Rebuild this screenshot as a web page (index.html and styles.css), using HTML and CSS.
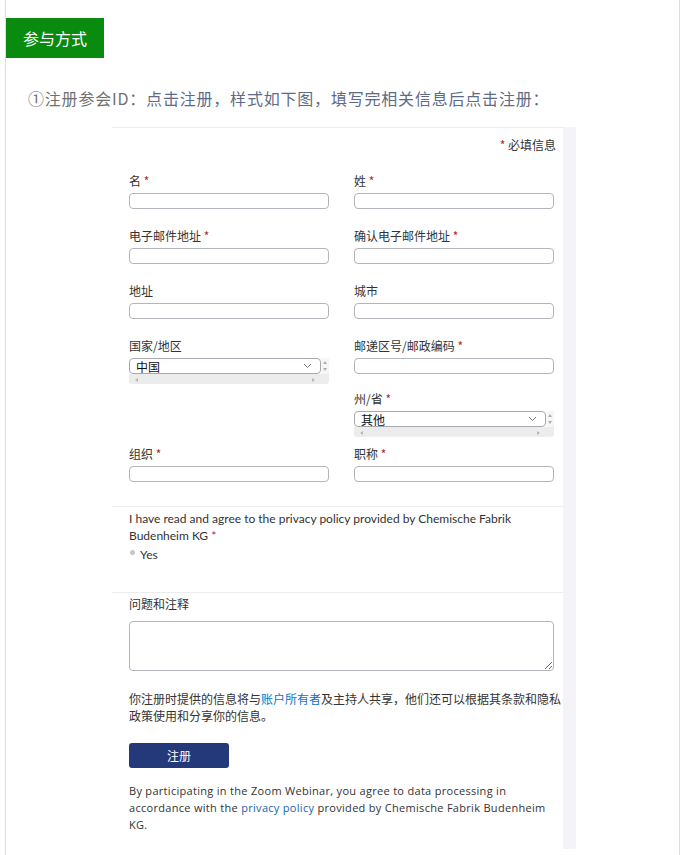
FILE: index.html
```html
<!DOCTYPE html>
<html lang="zh-CN">
<head>
    <meta charset="UTF-8">
    <meta name="viewport" content="width=device-width, initial-scale=1.0">
    <title>参与方式</title>
    <link rel="stylesheet" href="styles.css">
</head>
<body>
    <div class="page">
        <div class="section-title">参与方式</div>
        <p class="intro"><span class="step">①注册参会ID：</span><span class="step-text">点击注册，样式如下图，填写完相关信息后点击注册：</span></p>

        <div class="shot">
            <div class="form-wrap">
                <div class="required-note"><span class="star">*</span> 必填信息</div>

                <div class="fields">
                    <div class="field">
                        <label>名 <span class="star">*</span></label>
                        <input type="text">
                    </div>
                    <div class="field">
                        <label>姓 <span class="star">*</span></label>
                        <input type="text">
                    </div>
                    <div class="field">
                        <label>电子邮件地址 <span class="star">*</span></label>
                        <input type="text">
                    </div>
                    <div class="field">
                        <label>确认电子邮件地址 <span class="star">*</span></label>
                        <input type="text">
                    </div>
                    <div class="field">
                        <label>地址</label>
                        <input type="text">
                    </div>
                    <div class="field">
                        <label>城市</label>
                        <input type="text">
                    </div>
                    <div class="field">
                        <label>国家/地区</label>
                        <div class="fake-select">
                            <div class="select-row">
                                <div class="select-box">
                                    <span>中国</span>
                                    <svg class="chevron" width="9" height="6" viewBox="0 0 9 6"><path d="M1 1l3.5 3.5L8 1" fill="none" stroke="#777" stroke-width="1"/></svg>
                                </div>
                                <div class="vbar"><i class="up"></i><i class="down"></i></div>
                            </div>
                            <div class="hbar"><i class="left"></i><i class="right"></i></div>
                        </div>
                    </div>
                    <div class="stack">
                        <div class="field">
                            <label>邮递区号/邮政编码 <span class="star">*</span></label>
                            <input type="text">
                        </div>
                        <div class="field">
                            <label>州/省 <span class="star">*</span></label>
                            <div class="fake-select">
                                <div class="select-row">
                                    <div class="select-box">
                                        <span>其他</span>
                                        <svg class="chevron" width="9" height="6" viewBox="0 0 9 6"><path d="M1 1l3.5 3.5L8 1" fill="none" stroke="#777" stroke-width="1"/></svg>
                                    </div>
                                    <div class="vbar"><i class="up"></i><i class="down"></i></div>
                                </div>
                                <div class="hbar"><i class="left"></i><i class="right"></i></div>
                            </div>
                        </div>
                    </div>
                    <div class="field">
                        <label>组织 <span class="star">*</span></label>
                        <input type="text">
                    </div>
                    <div class="field">
                        <label>职称 <span class="star">*</span></label>
                        <input type="text">
                    </div>
                </div>

                <div class="consent">
                    <p>I have read and agree to the privacy policy provided by Chemische Fabrik Budenheim KG <span class="star">*</span></p>
                    <div class="radio-row"><span class="radio"></span>Yes</div>
                </div>

                <div class="comments">
                    <label>问题和注释</label>
                    <textarea></textarea>
                </div>

                <p class="share-note">你注册时提供的信息将与<a href="#">账户所有者</a>及主持人共享，他们还可以根据其条款和隐私政策使用和分享你的信息。</p>

                <button type="button" class="register-btn">注册</button>

                <p class="legal">By participating in the Zoom Webinar, you agree to data processing in accordance with the <a href="#">privacy policy</a> provided by Chemische Fabrik Budenheim KG.</p>
            </div>
            <div class="side-strip"></div>
        </div>
    </div>
</body>
</html>
```

FILE: styles.css
```css
body {
    margin: 0;
    padding: 0;
    background-color: #fff;
    font-family: "Noto Sans CJK SC", "Liberation Sans", sans-serif;
}

.page {
    margin-left: 5px;
    width: 675px;
    min-height: 855px;
    border-left: 1px solid #dedede;
    border-right: 1px solid #dedede;
    padding-top: 18px;
    box-sizing: border-box;
}

.section-title {
    width: 98px;
    height: 40px;
    line-height: 40px;
    background-color: #088b0e;
    color: #fff;
    font-size: 16px;
    text-align: center;
}

.intro {
    margin: 29px 0 0 22px;
    font-size: 16px;
    line-height: 22px;
    letter-spacing: 0.8px;
    color: #707070;
}

.intro .step-text {
    color: #5e6b86;
}

.shot {
    display: flex;
    margin: 18px 0 0 106px;
    width: 464px;
}

.form-wrap {
    width: 451px;
    border-top: 1px solid #ececf0;
    padding: 8px 0 16px 17px;
    box-sizing: border-box;
    color: #333;
    font-size: 12px;
}

.side-strip {
    width: 13px;
    background-color: #f4f4f8;
}

.star {
    color: #b8262b;
}

.required-note {
    text-align: right;
    padding-right: 7px;
    line-height: 18px;
}

.fields {
    display: grid;
    grid-template-columns: 200px 200px;
    column-gap: 25px;
    row-gap: 20px;
    margin-top: 20px;
}

.field label {
    display: block;
    line-height: 14px;
    margin-bottom: 5px;
}

.field input {
    display: block;
    width: 200px;
    height: 16px;
    box-sizing: border-box;
    border: 1px solid #b4b4bc;
    border-radius: 4px;
    margin: 0;
    padding: 0 6px;
    background: #fff;
}

.stack {
    display: flex;
    flex-direction: column;
    gap: 18px;
}

.fake-select {
    width: 200px;
    margin-bottom: -10px;
}

.select-row {
    display: flex;
    height: 16px;
}

.select-box {
    flex: 1;
    display: flex;
    align-items: center;
    justify-content: space-between;
    border: 1px solid #a8a8b0;
    border-radius: 4px;
    padding: 0 8px 0 6px;
    font-size: 12px;
    color: #111;
    background: #fff;
}

.vbar {
    width: 8px;
    position: relative;
    background: #f6f6f6;
}

.vbar i, .hbar i {
    position: absolute;
    width: 0;
    height: 0;
}

.vbar .up {
    left: 2px;
    top: 3px;
    border-left: 2px solid transparent;
    border-right: 2px solid transparent;
    border-bottom: 3px solid #b0b0b0;
}

.vbar .down {
    left: 2px;
    bottom: 3px;
    border-left: 2px solid transparent;
    border-right: 2px solid transparent;
    border-top: 3px solid #b0b0b0;
}

.hbar {
    position: relative;
    height: 10px;
    background: #ececec;
    border-radius: 0 0 3px 3px;
}

.hbar .left {
    left: 6px;
    top: 4px;
    border-top: 2px solid transparent;
    border-bottom: 2px solid transparent;
    border-right: 3px solid #b8b8b8;
}

.hbar .right {
    right: 14px;
    top: 4px;
    border-top: 2px solid transparent;
    border-bottom: 2px solid transparent;
    border-left: 3px solid #b8b8b8;
}

.consent {
    margin: 24px 0 0 -17px;
    padding: 3px 0 29px 17px;
    border-top: 1px solid #ececf0;
    border-bottom: 1px solid #ececf0;
    font-family: Lato, "Noto Sans CJK SC", sans-serif;
}

.consent p {
    margin: 0;
    line-height: 17px;
    width: 400px;
}

.radio-row {
    margin-top: 2px;
    line-height: 17px;
    display: flex;
    align-items: center;
}

.radio {
    width: 5px;
    height: 5px;
    border-radius: 50%;
    background: #c6c6c6;
    margin: -4px 5px 0 1px;
}

.comments {
    margin-top: 4px;
}

.comments label {
    display: block;
    line-height: 14px;
    margin-bottom: 10px;
}

.comments textarea {
    display: block;
    width: 425px;
    height: 50px;
    box-sizing: border-box;
    border: 1px solid #b4b4bc;
    border-radius: 4px;
    margin: 0;
    resize: both;
}

.share-note {
    margin: 19px 0 0;
    line-height: 17px;
    width: 440px;
}

.share-note a {
    color: #0e72c9;
    text-decoration: none;
}

.register-btn {
    display: block;
    margin-top: 19px;
    width: 100px;
    height: 25px;
    background-color: #24397a;
    color: #fff;
    border: none;
    border-radius: 3px;
    font-family: "Noto Sans CJK SC", sans-serif;
    font-size: 12px;
    padding: 0;
}

.legal {
    margin: 14px 0 0;
    font-family: "Open Sans", sans-serif;
    font-size: 11px;
    line-height: 17px;
    letter-spacing: 0.3px;
    color: #333;
    width: 420px;
}

.legal a {
    color: #1865a8;
    text-decoration: none;
}
```
